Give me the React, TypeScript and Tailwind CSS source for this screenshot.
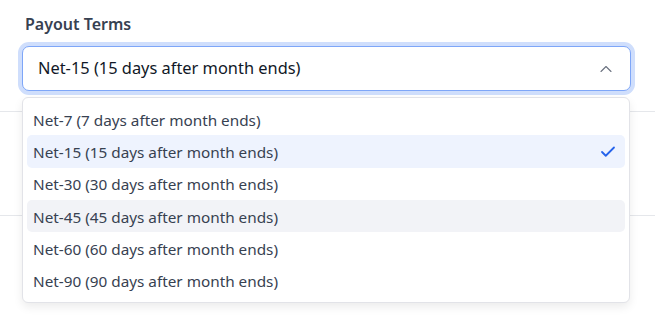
import { Check, ChevronUp } from 'lucide-react';

const options = [
  'Net-7 (7 days after month ends)',
  'Net-15 (15 days after month ends)',
  'Net-30 (30 days after month ends)',
  'Net-45 (45 days after month ends)',
  'Net-60 (60 days after month ends)',
  'Net-90 (90 days after month ends)',
];

export default function App() {
  const selected = 1;
  const hovered = 3;

  return (
    <div
      className="min-h-screen w-[655px] h-[322px] overflow-hidden bg-white"
      style={{ fontFamily: '"Segoe UI", "Noto Sans", Inter, sans-serif' }}
    >
      <div className="pl-[22px] pr-[24px] pt-[13px]">
        <label className="block text-[16px] leading-[23px] font-semibold text-[#374151] pl-[3px]">
          Payout Terms
        </label>

        {/* Select */}
        <div className="relative mt-[10px]">
          <button className="w-full h-[45px] flex items-center justify-between pl-[15px] pr-[14px] bg-white border border-[#7ea6f8] rounded-[7px] ring-4 ring-[#cfdefc] text-left">
            <span className="text-[16.4px] text-[#111827]">{options[selected]}</span>
            <ChevronUp className="w-[20px] h-[20px] text-[#6b7280]" strokeWidth={1.3} />
          </button>

          {/* Dropdown */}
          <div className="absolute left-0 right-[1px] top-[51px] z-10 bg-white border border-[#e2e3e8] rounded-[6px] shadow-[0_4px_10px_rgba(0,0,0,0.08)] px-[4px] py-[5px]">
            {options.map((o, i) => (
              <div
                key={o}
                className={
                  'h-[32.3px] flex items-center justify-between pl-[6px] pr-[8px] pt-[2px] rounded-[5px] text-[15.3px] text-[#374151] ' +
                  (i === selected ? 'bg-[#eef3fe]' : i === hovered ? 'bg-[#f2f3f7]' : '')
                }
              >
                <span>{o}</span>
                {i === selected && <Check className="w-[18px] h-[18px] text-[#2563eb]" strokeWidth={2.4} />}
              </div>
            ))}
          </div>
        </div>
      </div>

      {/* content behind the open menu */}
      <div className="mt-[20px] h-[105px] border-y border-[#e5e7eb]" />
    </div>
  );
}
